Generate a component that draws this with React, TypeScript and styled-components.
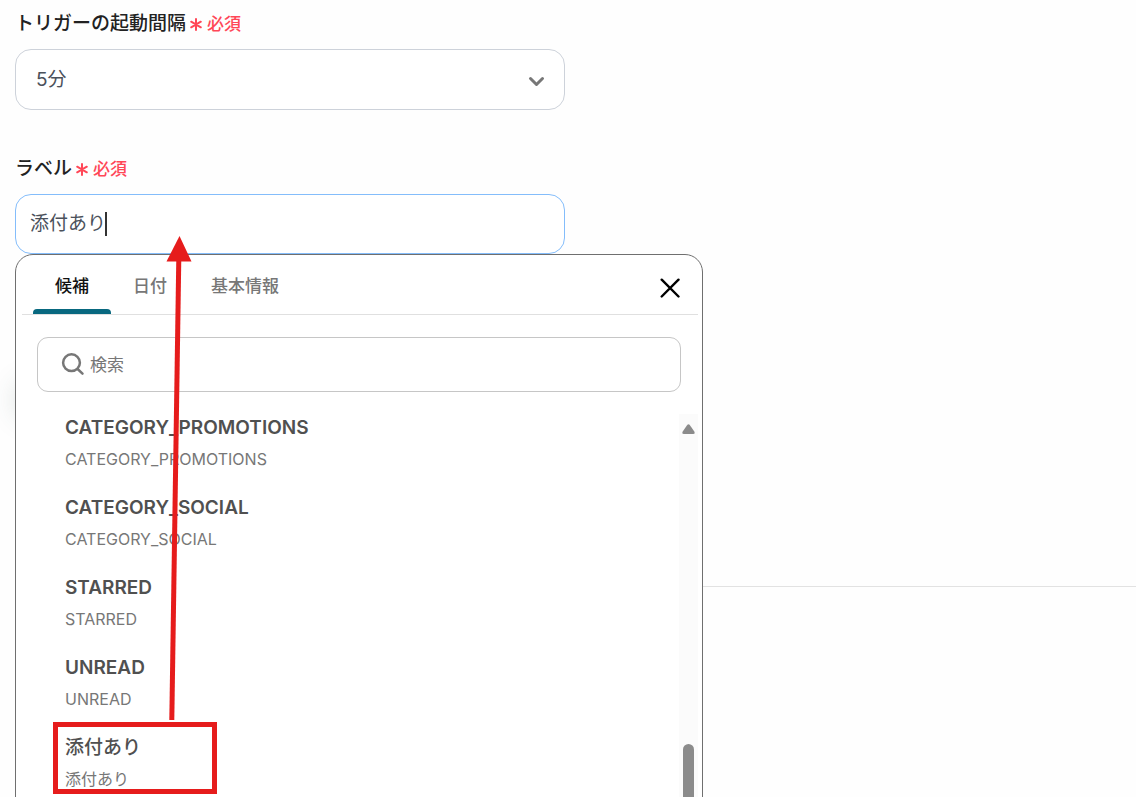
import React, { useState } from "react";
import styled, { createGlobalStyle } from "styled-components";

const GlobalStyle = createGlobalStyle`
  *, *::before, *::after { box-sizing: border-box; }
  body {
    margin: 0;
    background: #fefefe;
    font-family: Inter, "Noto Sans CJK JP", sans-serif;
    color: #222;
  }
  button, input, select { font: inherit; }
`;

const Page = styled.main`
  position: relative;
  height: 100vh;
  overflow: hidden;
`;

const Form = styled.form`
  display: flex;
  flex-direction: column;
  gap: 44px;
  padding: 9px 15px 0;
`;

const Field = styled.div`
  position: relative;
  display: flex;
  flex-direction: column;
  gap: 10px;
  max-width: 550px;
`;

const FieldLabel = styled.label`
  display: flex;
  align-items: center;
  gap: 4px;
  font-size: 19px;
  font-weight: 500;
  line-height: 30px;
`;

const Required = styled.span`
  display: flex;
  align-items: center;
  gap: 5px;
  color: #ff4757;
  font-size: 17px;
`;

const Control = styled.div<{ $focused?: boolean }>`
  display: flex;
  align-items: center;
  height: ${(p) => (p.$focused ? 60 : 61)}px;
  padding: 0 ${(p) => (p.$focused ? 14 : 18)}px;
  border: 1px solid ${(p) => (p.$focused ? "#84bdfb" : "#cdd2da")};
  border-radius: 16px;
  background: #fff;
  color: #4b515b;
`;

const Select = styled.select`
  flex: 1;
  appearance: none;
  border: 0;
  outline: 0;
  padding: 0 0 0 2px;
  background: transparent;
  color: inherit;
  font-size: 19px;
  line-height: 30px;
`;

const TextInput = styled.input`
  field-sizing: content;
  border: 0;
  outline: 0;
  padding: 0;
  background: transparent;
  color: inherit;
  caret-color: transparent;
  font-size: 19px;
  line-height: 30px;
`;

const Caret = styled.span`
  width: 2px;
  height: 24px;
  margin-left: -1px;
  background: #333;
`;

const Divider = styled.hr`
  margin: 332px 0 0 15px;
  border: 0;
  border-top: 1px solid #e2e2e2;
`;

const Glow = styled.div`
  position: absolute;
  top: 384px;
  left: 18px;
  width: 60px;
  height: 32px;
  border-radius: 16px;
  box-shadow: 0 0 28px rgba(60, 90, 80, 0.25);
`;

const Panel = styled.section`
  position: absolute;
  top: 100%;
  left: 0;
  width: 688px;
  padding: 0 4px 40px 6px;
  border: 1px solid #6f6f6f;
  border-radius: 18px;
  background: #fff;
`;

const PanelHeader = styled.header`
  display: flex;
  align-items: center;
  justify-content: space-between;
  height: 60px;
  padding: 0 14px 0 11px;
  border-bottom: 1px solid #e0e0e0;
`;

const Tabs = styled.div`
  display: flex;
  align-self: stretch;
`;

const Tab = styled.button<{ $active: boolean }>`
  position: relative;
  padding: 2px 22px 0;
  border: 0;
  background: transparent;
  color: ${(p) => (p.$active ? "#111" : "#777")};
  font-size: 17px;
  font-weight: 500;
  line-height: 24px;
  cursor: pointer;

  &::after {
    content: "";
    position: absolute;
    right: 0;
    bottom: 0;
    left: 0;
    height: 5px;
    border-radius: 4px 4px 0 0;
    background: ${(p) => (p.$active ? "#08687f" : "transparent")};
  }
`;

const CloseButton = styled.button`
  display: flex;
  padding: 10px 4px 4px;
  border: 0;
  background: transparent;
  color: #000;
  cursor: pointer;
`;

const SearchBox = styled.label`
  display: flex;
  align-items: center;
  gap: 5px;
  height: 55px;
  margin: 22px 17px 22px 15px;
  padding: 0 23px;
  border: 1px solid #c6c6c6;
  border-radius: 11px;
  color: #777;
`;

const SearchInput = styled.input`
  flex: 1;
  border: 0;
  outline: 0;
  padding: 0;
  background: transparent;
  color: #444;
  font-size: 17px;
  line-height: 24px;

  &::placeholder { color: #777; opacity: 1; }
`;

const ListArea = styled.div`
  display: flex;
`;

const List = styled.ul`
  flex: 1;
  margin: 0;
  padding: 0 0 0 43px;
  list-style: none;
`;

const Item = styled.li`
  position: relative;
  height: 80px;
`;

const ItemButton = styled.button`
  display: flex;
  flex-direction: column;
  align-items: flex-start;
  gap: 5px;
  padding: 0;
  border: 0;
  background: transparent;
  text-align: left;
  cursor: pointer;
`;

const ItemTitle = styled.span<{ $medium: boolean }>`
  color: #505050;
  font-size: 19px;
  font-weight: ${(p) => (p.$medium ? 500 : 600)};
  line-height: 28px;
`;

const ItemValue = styled.span`
  color: #777;
  font-size: 16px;
  line-height: 24px;
`;

const Highlight = styled.span`
  position: absolute;
  top: -12px;
  left: -12px;
  width: 164px;
  height: 72px;
  border: 5px solid #e61c1c;
  pointer-events: none;
`;

const Scrollbar = styled.div`
  display: flex;
  flex-direction: column;
  align-items: center;
  justify-content: space-between;
  width: 19px;
  padding-top: 10px;
  background: #fbfbfb;
`;

const Thumb = styled.div`
  width: 11px;
  height: 70px;
  border-radius: 6px;
  background: #8b8b8b;
`;

const Annotation = styled.svg`
  position: absolute;
  top: 0;
  left: 0;
  pointer-events: none;
`;

const RequiredMark = () => (
  <Required>
    <svg width="12" height="14" viewBox="0 0 12 14" fill="none" stroke="currentColor" strokeWidth="2" strokeLinecap="round" aria-hidden="true">
      <path d="M6 2v11M1.2 4.7l9.6 5.6M10.8 4.7l-9.6 5.6" />
    </svg>
    必須
  </Required>
);

const tabs = ["候補", "日付", "基本情報"];
const options = [
  { name: "CATEGORY_PROMOTIONS" },
  { name: "CATEGORY_SOCIAL" },
  { name: "STARRED" },
  { name: "UNREAD" },
  { name: "添付あり", custom: true },
];

export default function App() {
  const [tab, setTab] = useState(tabs[0]);
  const [label, setLabel] = useState("添付あり");

  return (
    <Page>
      <GlobalStyle />
      <Glow />
      <Form onSubmit={(e) => e.preventDefault()}>
        <Field>
          <FieldLabel htmlFor="interval">トリガーの起動間隔<RequiredMark /></FieldLabel>
          <Control>
            <Select id="interval" defaultValue="5">
              <option value="5">5分</option>
              <option value="10">10分</option>
              <option value="15">15分</option>
            </Select>
            <svg width="18" height="14" viewBox="0 0 18 14" fill="none" stroke="#777" strokeWidth="3" strokeLinecap="round" strokeLinejoin="round" aria-hidden="true">
              <path d="M2.5 5.5l6 6 6-6" />
            </svg>
          </Control>
        </Field>
        <Field>
          <FieldLabel htmlFor="label">ラベル<RequiredMark /></FieldLabel>
          <Control $focused>
            <TextInput id="label" value={label} onChange={(e) => setLabel(e.target.value)} />
            <Caret />
          </Control>
          <Panel>
            <PanelHeader>
              <Tabs role="tablist">
                {tabs.map((name) => (
                  <Tab key={name} type="button" role="tab" aria-selected={tab === name} $active={tab === name} onClick={() => setTab(name)}>
                    {name}
                  </Tab>
                ))}
              </Tabs>
              <CloseButton type="button" aria-label="閉じる">
                <svg width="20" height="20" viewBox="0 0 20 20" fill="none" stroke="currentColor" strokeWidth="2.4" strokeLinecap="round" aria-hidden="true">
                  <path d="M1.7 1.7l16.8 16.8M18.5 1.7L1.7 18.5" />
                </svg>
              </CloseButton>
            </PanelHeader>
            <SearchBox>
              <svg width="24" height="24" viewBox="0 0 24 24" fill="none" stroke="currentColor" strokeWidth="2.5" strokeLinecap="round" aria-hidden="true">
                <circle cx="10.5" cy="9.7" r="8.4" />
                <path d="M16.6 16l4.9 4.7" />
              </svg>
              <SearchInput type="search" placeholder="検索" aria-label="検索" />
            </SearchBox>
            <ListArea>
              <List>
                {options.map(({ name, custom }) => (
                  <Item key={name}>
                    <ItemButton type="button" onClick={() => setLabel(name)}>
                      <ItemTitle $medium={!!custom}>{name}</ItemTitle>
                      <ItemValue>{name}</ItemValue>
                    </ItemButton>
                    {custom && <Highlight />}
                  </Item>
                ))}
              </List>
              <Scrollbar aria-hidden="true">
                <svg width="13" height="10" viewBox="0 0 13 10" fill="#8b8b8b">
                  <path d="M5.4.8Q6.5-.5 7.6.8L12.3 7.6Q13.4 10 11.2 10H1.8Q-.4 10 .7 7.6Z" />
                </svg>
                <Thumb />
              </Scrollbar>
            </ListArea>
          </Panel>
        </Field>
      </Form>
      <Divider />
      <Annotation width="220" height="797" viewBox="0 0 220 797" aria-hidden="true">
        <path d="M171.8 720L178.8 258" stroke="#e61c1c" strokeWidth="5" />
        <path d="M179.5 236L191.5 261.5H166.5Z" fill="#e61c1c" />
      </Annotation>
    </Page>
  );
}
